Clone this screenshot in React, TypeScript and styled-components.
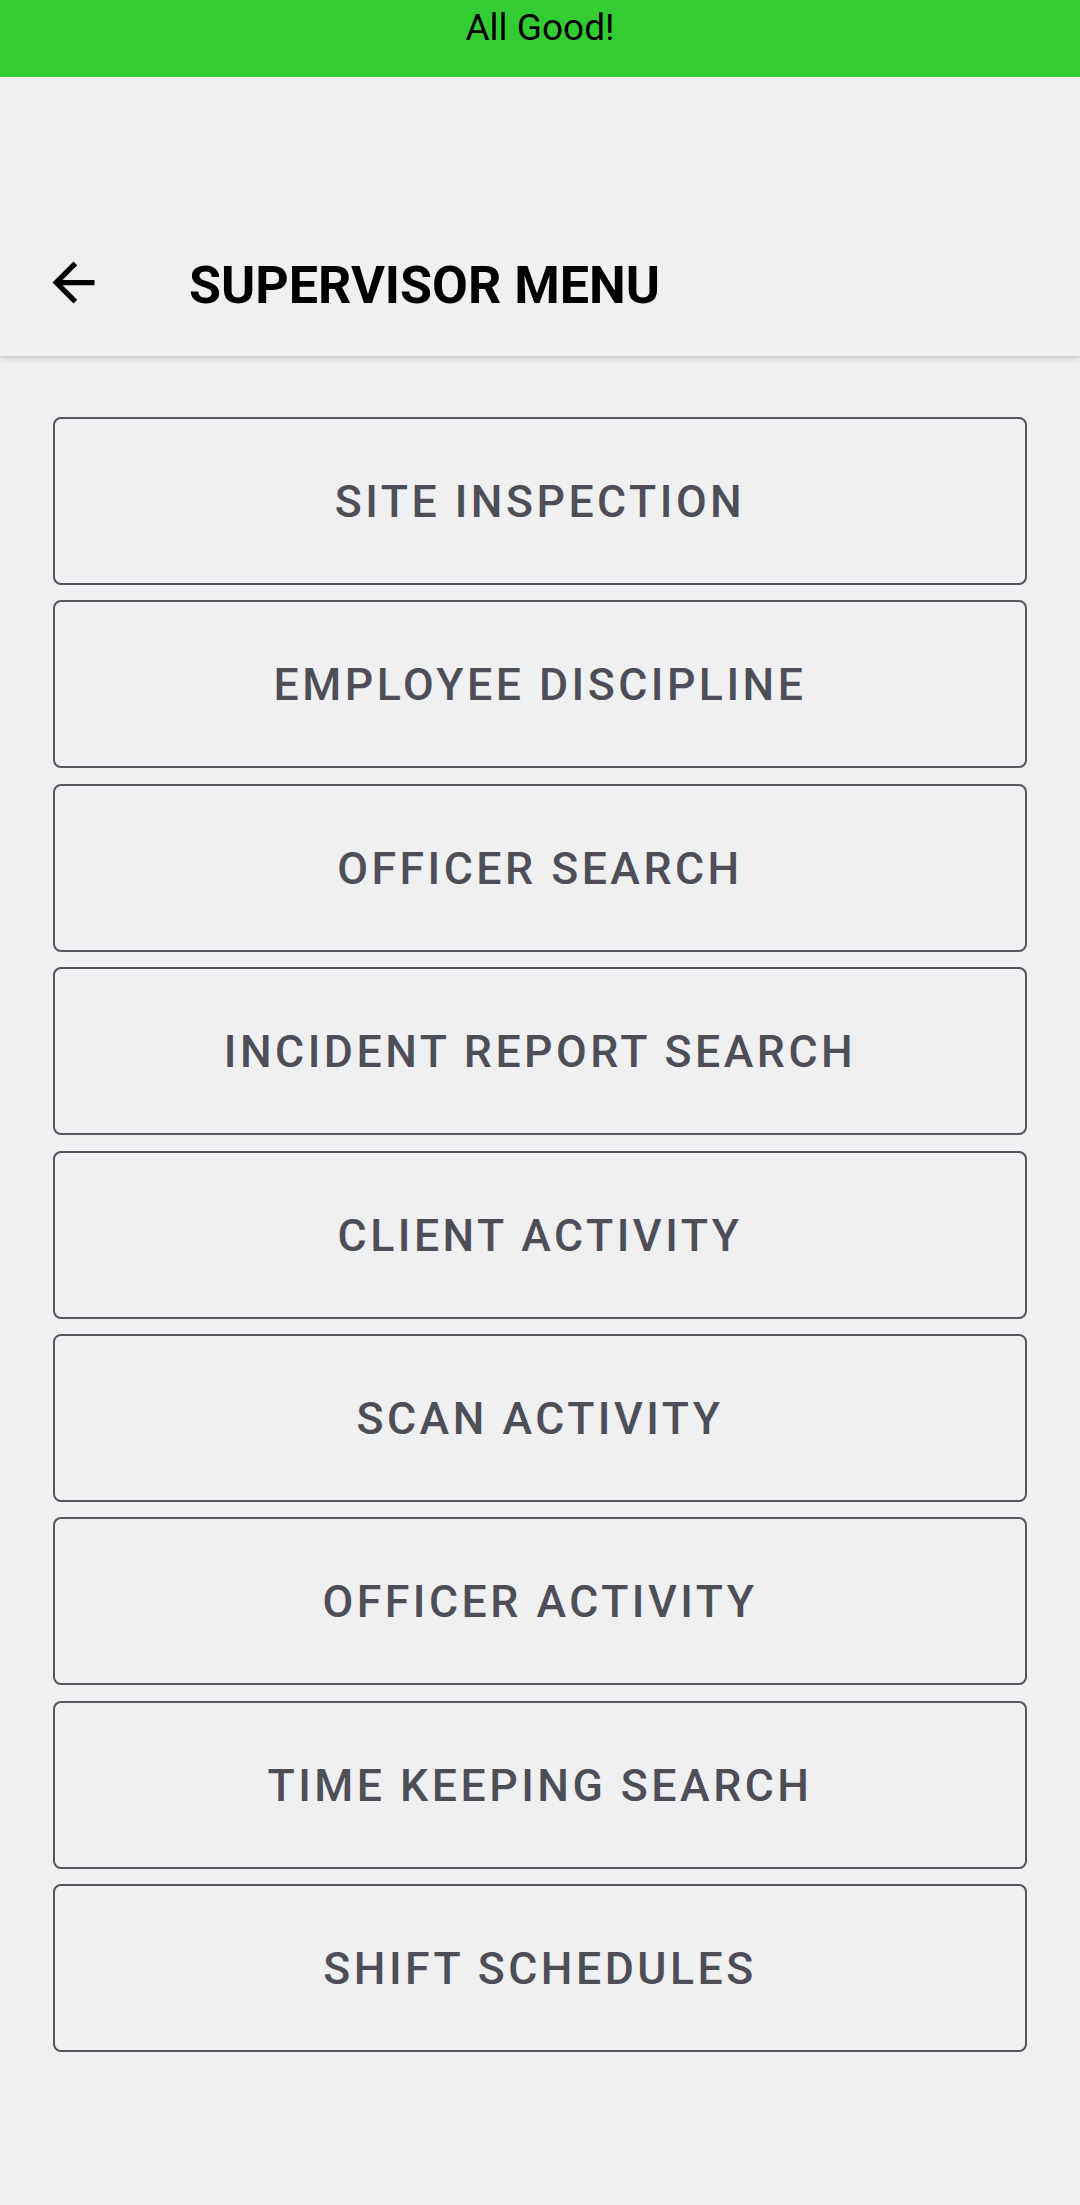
import React from "react";
import styled, { createGlobalStyle } from "styled-components";

const GlobalStyle = createGlobalStyle`
  html, body {
    margin: 0;
    padding: 0;
    background: #eff0f2;
  }
  body {
    font-family: Roboto, "Noto Sans", sans-serif;
  }
`;

const Root = styled.div`
  display: flex;
  flex-direction: column;
  min-height: 2205px;
  background: #eff0f2;
`;

const StatusBanner = styled.div`
  height: 77px;
  box-sizing: border-box;
  padding-top: 6px;
  background: #33cd33;
  color: #000;
  font-size: 37px;
  line-height: 1.17;
  text-align: center;
`;

const AppBar = styled.header`
  position: relative;
  z-index: 1;
  display: flex;
  align-items: flex-end;
  height: 279px;
  background: #eff0f2;
  box-shadow: 0 3px 6px rgba(0, 0, 0, 0.12), 0 1px 2px rgba(0, 0, 0, 0.06);
`;

const Toolbar = styled.div`
  display: flex;
  align-items: center;
  width: 100%;
  height: 147px;
`;

const BackButton = styled.button`
  display: flex;
  align-items: center;
  justify-content: center;
  width: 63px;
  height: 63px;
  margin-left: 42px;
  padding: 0;
  border: none;
  background: none;
  color: #000;
`;

const Title = styled.h1`
  margin: 0 0 0 84px;
  padding-top: 5px;
  font-size: 52px;
  font-weight: 700;
  color: #000;
`;

const MenuList = styled.nav`
  display: flex;
  flex-direction: column;
  gap: 15.4px;
  padding: 61px 53px 0;
`;

const MenuButton = styled.button`
  height: 168px;
  box-sizing: border-box;
  padding: 2px 0 0;
  border: 2.5px solid #55565d;
  border-radius: 8px;
  background: transparent;
  color: #4d4e57;
  font-family: Roboto, "Noto Sans", sans-serif;
  font-size: 44.6px;
  font-weight: 500;
  letter-spacing: 3.5px;
  text-transform: uppercase;
`;

const ArrowBack = () => (
  <svg width="63" height="63" viewBox="0 0 24 24" fill="currentColor">
    <path d="M20 11H7.83l5.59-5.59L12 4l-8 8 8 8 1.41-1.41L7.83 13H20v-2z" />
  </svg>
);

const items = [
  "Site Inspection",
  "Employee Discipline",
  "Officer Search",
  "Incident Report Search",
  "Client Activity",
  "Scan Activity",
  "Officer Activity",
  "Time Keeping Search",
  "Shift Schedules",
];

export default function App() {
  return (
    <Root>
      <GlobalStyle />
      <StatusBanner>All Good!</StatusBanner>
      <AppBar>
        <Toolbar>
          <BackButton aria-label="Back">
            <ArrowBack />
          </BackButton>
          <Title>SUPERVISOR MENU</Title>
        </Toolbar>
      </AppBar>
      <MenuList>
        {items.map((item) => (
          <MenuButton key={item}>{item}</MenuButton>
        ))}
      </MenuList>
    </Root>
  );
}
